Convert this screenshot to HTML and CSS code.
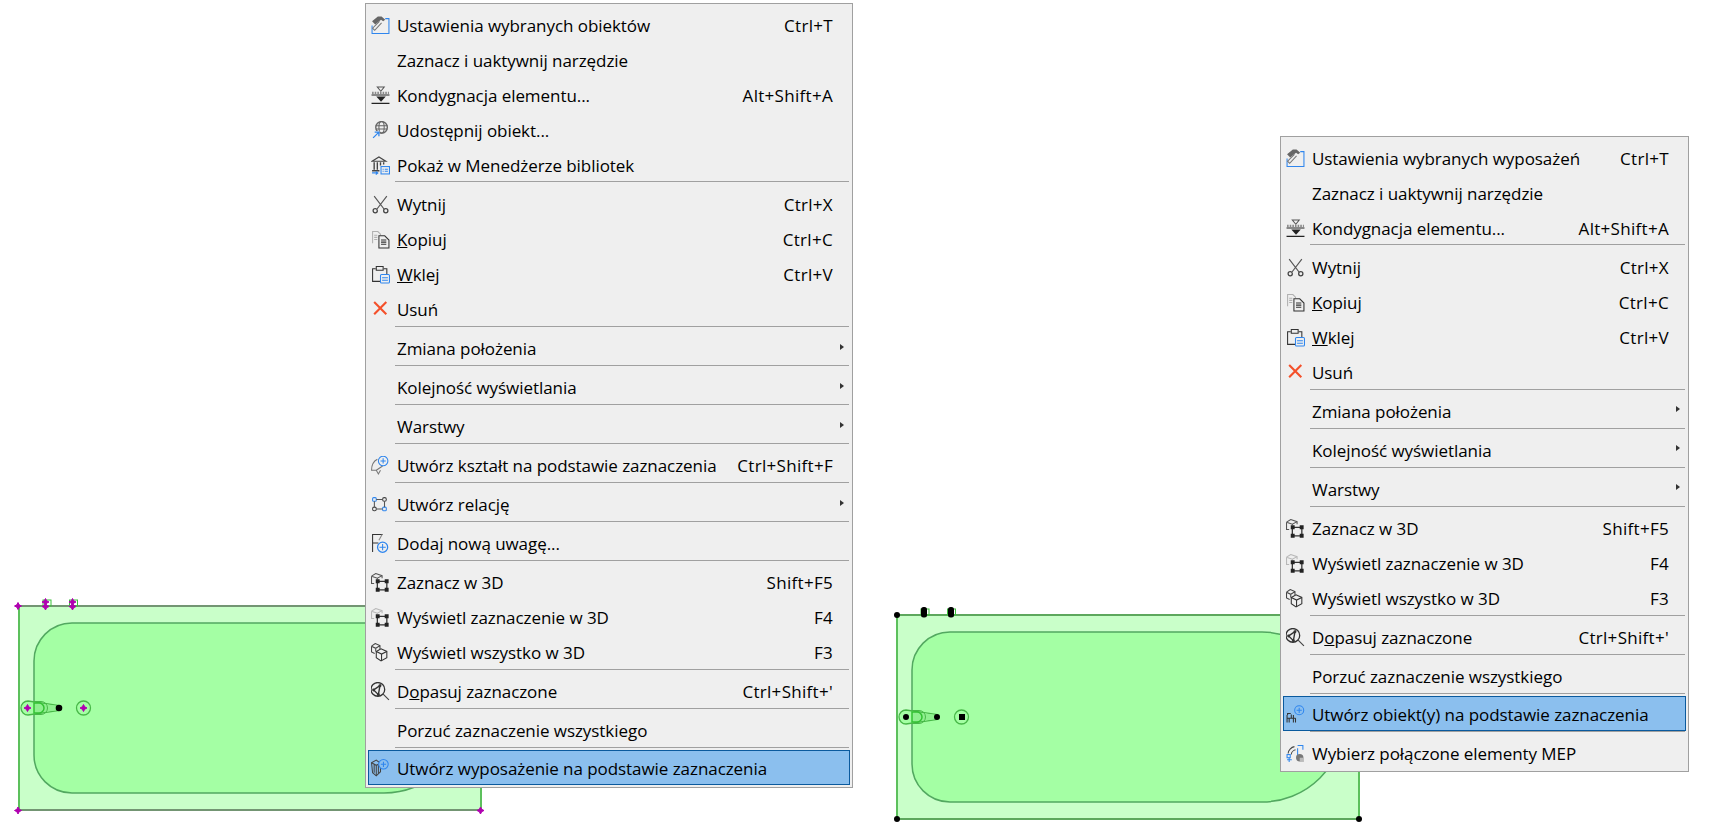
FILE: index.html
```html
<!DOCTYPE html>
<html lang="pl">
<head>
<meta charset="utf-8">
<title>Menu kontekstowe</title>
<link rel="stylesheet" href="styles.css">
</head>
<body>
<svg class="sprite" width="0" height="0" aria-hidden="true">
  <defs>
    <symbol id="i-settings" viewBox="0 0 18 18">
      <path d="M1 9v7.500h16V2.500H13.500" fill="none" stroke="#2f86ee" stroke-width="1"/>
      <path d="M1 5 6.500 0.500h3.500l3.500 3-2 1.500L9.500 3.500 4 8Z" fill="#666"/>
      <path d="M8 5 1.500 11.500 3.500 13.500 10 6.500" fill="none" stroke="#777"/>
    </symbol>
    <symbol id="i-level" viewBox="0 0 18 18">
      <path d="M6 1h6.500l-3.200 4z" fill="none" stroke="#555"/>
      <path d="M1 6.500h16" stroke="#888" stroke-width="2" stroke-dasharray="1.500 1"/>
      <path d="M0.500 8.500h17M0.500 16.500h17" stroke="#222" stroke-width="1.100"/>
      <path d="M5 10h9l-4.500 5z" fill="#222"/>
    </symbol>
    <symbol id="i-share" viewBox="0 0 18 18">
      <circle cx="10" cy="6" r="5.500" fill="none" stroke="#666" stroke-width="1.300"/>
      <ellipse cx="10" cy="6" rx="2.500" ry="5.500" fill="none" stroke="#666"/>
      <path d="M4.500 4.500h11M4.500 7.500h11" stroke="#666"/>
      <path d="M1 9.500h7v7H1z" fill="#efefef"/>
      <path d="M2 16 7 11M3.500 10.500H7.500V14.500" fill="none" stroke="#2f86ee" stroke-width="1.200"/>
    </symbol>
    <symbol id="i-library" viewBox="0 0 18 18">
      <path d="M1 5 7.500 1 14 5Z" fill="none" stroke="#444" stroke-width="1.100"/>
      <path d="M3 6v7M6 6v7M9 6v3M12 6v2M1 14h7" stroke="#444" stroke-width="1.300"/>
      <rect x="9.500" y="10" width="8" height="7" fill="#efefef" stroke="#2f86ee"/>
      <path d="M11 12.500h1M13 12.500h3M11 14.500h1M13 14.500h3" stroke="#2f86ee"/>
      <path d="M1 16h5M4.500 14.500 6.500 16 4.500 17.500" fill="none" stroke="#2f86ee"/>
    </symbol>
    <symbol id="i-cut" viewBox="0 0 18 18">
      <path d="M3 1l9.500 12.500M15 1 5.500 13.500" stroke="#555" stroke-width="1.100"/>
      <circle cx="4" cy="15" r="2" fill="none" stroke="#444" stroke-width="1.200"/>
      <circle cx="14" cy="15" r="2" fill="none" stroke="#444" stroke-width="1.200"/>
    </symbol>
    <symbol id="i-copy" viewBox="0 0 18 18">
      <path d="M1.500 12.500v-11h5l2.500 2.500v1" fill="none" stroke="#b0b0b0"/>
      <path d="M3 5h3M3 7h3M3 9h3" stroke="#b0b0b0"/>
      <path d="M7.500 5.500h5.500l4 4v7.500H7.500Z" fill="#efefef" stroke="#333"/>
      <path d="M9.500 9.500h5M9.500 11.500h5M9.500 13.500h5" stroke="#333"/>
    </symbol>
    <symbol id="i-paste" viewBox="0 0 18 18">
      <path d="M9 15.500H1.500v-12h3M12 3.500h3v5" fill="none" stroke="#333"/>
      <path d="M5 1.500h6.500v3.500H5z" fill="none" stroke="#333"/>
      <rect x="9" y="9" width="8.500" height="8" rx="1" fill="#efefef" stroke="#2f86ee"/>
      <path d="M10.500 12h5.500M10.500 14.500h5.500" stroke="#2f86ee"/>
    </symbol>
    <symbol id="i-delete" viewBox="0 0 18 18">
      <path d="M3 2 14.500 13.500M14.500 2 3 13.500" stroke="#f4502a" stroke-width="2"/>
    </symbol>
    <symbol id="i-shape" viewBox="0 0 18 18">
      <path d="M6 3C2 5 0.500 9 0.500 13.500H5L7 17l2-3.500M5 13.500 11 9.500" fill="none" stroke="#777"/>
      <circle cx="11.500" cy="4.700" r="4.500" fill="#efefef" stroke="#2f86ee"/>
      <path d="M9 4.700h5M11.500 2.200v5" stroke="#2f86ee"/>
    </symbol>
    <symbol id="i-relation" viewBox="0 0 18 18">
      <rect x="1.500" y="2.500" width="3.500" height="3.500" rx="1" fill="none" stroke="#2f86ee"/>
      <rect x="11" y="2.500" width="3.500" height="3.500" rx="1.500" fill="none" stroke="#444"/>
      <rect x="1.500" y="11.500" width="3.500" height="3.500" rx="1.500" fill="none" stroke="#444"/>
      <rect x="11" y="11.500" width="3.500" height="3.500" rx="1" fill="none" stroke="#2f86ee"/>
      <path d="M5 4.200h6M3.200 6v5.500M12.800 6v5.500M5 13.200h6" stroke="#555"/>
    </symbol>
    <symbol id="i-note" viewBox="0 0 18 18">
      <path d="M1.500 17V0.500H11M1.500 8.500H7" fill="none" stroke="#333"/>
      <path d="M7.500 6 10.500 0.500" stroke="#888"/>
      <circle cx="11" cy="12.500" r="4.800" fill="#efefef" stroke="#2f86ee" stroke-width="1.200"/>
      <path d="M8 12.500h6M11 9.500v6" stroke="#2f86ee"/>
    </symbol>
    <symbol id="i-sel3d" viewBox="0 0 18 18">
      <path d="M0.500 3 4.500 0.500 10.500 2.500V5M0.500 3 6 5 10.500 2.500M0.500 3V10H3M6 5V6" fill="none" stroke="#555"/>
      <path d="M6 8H15V16H6Z" fill="none" stroke="#333" stroke-width="1.200"/>
      <path d="M4.500 6h3.700v3.700H4.500zM13 6h3.700v3.700H13zM4.500 14h3.700v3.700H4.500zM13 14h3.700v3.700H13z" fill="#222"/>
    </symbol>
    <symbol id="i-show3d" viewBox="0 0 18 18">
      <path d="M0.500 3 4.500 0.500 10.500 2.500V5M0.500 3 6 5 10.500 2.500M0.500 3V10H3M6 5V6" fill="none" stroke="#b8b8b8"/>
      <path d="M6 8H15V16H6Z" fill="none" stroke="#333" stroke-width="1.200"/>
      <path d="M4.500 6h3.700v3.700H4.500zM13 6h3.700v3.700H13zM4.500 14h3.700v3.700H4.500zM13 14h3.700v3.700H13z" fill="#222"/>
    </symbol>
    <symbol id="i-all3d" viewBox="0 0 18 18">
      <path d="M0.500 3 4 0.500 8.500 2.500V6M0.500 3V8.500L3.500 10M0.500 3 4.500 5 8.500 2.500M4.500 5V8" fill="none" stroke="#444"/>
      <path d="M5 8 9.500 5.500 15 8v6l-5.500 3L5 14Z" fill="#efefef" stroke="#333"/>
      <path d="M5 8l5 2.500 5-2.500M10 10.500V17" fill="none" stroke="#333"/>
    </symbol>
    <symbol id="i-fit" viewBox="0 0 18 18">
      <circle cx="6.500" cy="7" r="6.500" fill="none" stroke="#333" stroke-width="1.200"/>
      <path d="M11.500 11.500 17 17" stroke="#444" stroke-width="1.100"/>
      <path d="M8.500 3.500 2.500 7.500 7 12Z" fill="none" stroke="#333" stroke-width="1.300"/>
      <circle cx="8.500" cy="3.500" r="1.400" fill="#333"/>
      <circle cx="2.500" cy="7.500" r="1.400" fill="#333"/>
      <circle cx="7" cy="12" r="1.400" fill="#333"/>
    </symbol>
    <symbol id="i-furn" viewBox="0 0 18 18">
      <path d="M0.500 3.500 5 1 9 4V12L5 16 1.500 13Z" fill="none" stroke="#444"/>
      <path d="M0.500 3.500 5 6 9 4M3 5v8M5 6V16M7 5.500V14" fill="none" stroke="#444"/>
      <circle cx="11.800" cy="5" r="4.500" fill="#8bbfee" stroke="#2f86ee"/>
      <path d="M9.300 5h5M11.800 2.500v5" stroke="#2f86ee"/>
    </symbol>
    <symbol id="i-chair" viewBox="0 0 18 18">
      <path d="M1 9.500v7M4.500 8h-3v1.500M5 9v3M1 12.500h8M3 12.500v4M7 12.500v4M9 12.500v4M7 9.500v3" fill="none" stroke="#333"/>
      <circle cx="12.500" cy="5" r="4.300" fill="#8bbfee" stroke="#2f86ee"/>
      <path d="M10 5h5M12.500 2.500v5" stroke="#2f86ee"/>
    </symbol>
    <symbol id="i-mep" viewBox="0 0 18 18">
      <path d="M2 9C2 6 5 3 8 2.500M5 10C5 8 7 6 9 5.500" fill="none" stroke="#444"/>
      <path d="M11 1.500h5v4M11 4v8" fill="none" stroke="#2f86ee"/>
      <rect x="1" y="10" width="3" height="3" fill="none" stroke="#2f86ee"/>
      <path d="M5.500 15H1M3 13v4" stroke="#2f86ee"/>
      <circle cx="13" cy="13" r="3.500" fill="#777"/>
      <path d="M13 13h4v4h-4z" fill="#bbb"/>
    </symbol>
    <g id="tub">
      <rect x="0" y="0" width="462" height="204" fill="#c9ffc9" stroke="#5cc05c" stroke-width="2"/>
      <path d="M0 0H462M0 204H462" stroke="var(--edge)" stroke-width="1"/>
      <path d="M15 55A38 38 0 0 1 53 17H365A82 82 0 0 1 447 99V105A82 82 0 0 1 365 187H53A38 38 0 0 1 15 149Z" fill="#a4ffa4" stroke="#52a860" stroke-width="1.500"/>
      <path d="M9 95 40 99.500V104.500L9 109A7 7 0 0 1 9 95Z" fill="#a4ffa4" stroke="#48b848" stroke-width="1.300"/>
      <path d="M15 96.500 40 100V104L15 107.500Z" fill="#8ff08f"/>
      <path d="M15 97H20A5 5 0 0 1 20 107H15Z" fill="#8ff08f" stroke="#33c033" stroke-width="1.500"/>
      <path d="M15 95.500H22A6.500 6.500 0 0 1 22 108.500H15" fill="none" stroke="#48b848"/>
      <circle cx="64.500" cy="102" r="7" fill="none" stroke="#48b848" stroke-width="1.300"/>
      <rect x="24" y="-6" width="8" height="6" fill="none" stroke="#3cc03c"/>
      <rect x="50.500" y="-6" width="8" height="6" fill="none" stroke="#3cc03c"/>
    </g>
    <path id="dia" d="M0-3.500 1.200-1.200 3.500 0 1.200 1.200 0 3.500-1.200 1.200-3.500 0-1.200-1.200Z" fill="#b000b0" stroke="#b000b0"/>
  </defs>
</svg>

<svg class="canvas" width="1722" height="828" aria-hidden="true">
  <use href="#tub" x="19" y="606" class="edge-purple"/>
  <use href="#dia" x="18" y="606"/>
  <use href="#dia" x="45.500" y="602"/>
  <use href="#dia" x="45.500" y="606.500"/>
  <use href="#dia" x="72.500" y="602"/>
  <use href="#dia" x="72.500" y="606.500"/>
  <use href="#dia" x="27.500" y="708"/>
  <use href="#dia" x="83.500" y="708"/>
  <use href="#dia" x="18" y="810.500"/>
  <use href="#dia" x="480.500" y="810.500"/>
  <circle cx="59" cy="708" r="3.300" fill="#000"/>

  <use href="#tub" x="897" y="615" class="edge-grey"/>
  <circle cx="897" cy="615" r="3" fill="#000"/>
  <circle cx="897" cy="819" r="3" fill="#000"/>
  <circle cx="1359" cy="819" r="3" fill="#000"/>
  <rect x="921" y="607" width="6" height="10.500" rx="2.500" fill="#000"/>
  <rect x="948" y="607" width="6" height="10.500" rx="2.500" fill="#000"/>
  <circle cx="906" cy="717" r="3" fill="#000"/>
  <circle cx="937" cy="717" r="3" fill="#000"/>
  <rect x="959" y="714" width="6" height="6" fill="#000"/>
</svg>

<nav class="menu menu-a">
  <div class="item"><svg class="ic"><use href="#i-settings"/></svg><span class="label">Ustawienia wybranych obiektów</span><span class="key">Ctrl+T</span></div>
  <div class="item"><span class="ic"></span><span class="label">Zaznacz i uaktywnij narzędzie</span></div>
  <div class="item"><svg class="ic"><use href="#i-level"/></svg><span class="label">Kondygnacja elementu...</span><span class="key">Alt+Shift+A</span></div>
  <div class="item"><svg class="ic"><use href="#i-share"/></svg><span class="label">Udostępnij obiekt...</span></div>
  <div class="item"><svg class="ic"><use href="#i-library"/></svg><span class="label">Pokaż w Menedżerze bibliotek</span></div>
  <div class="sep"></div>
  <div class="item"><svg class="ic"><use href="#i-cut"/></svg><span class="label">Wytni<u>j</u></span><span class="key">Ctrl+X</span></div>
  <div class="item"><svg class="ic"><use href="#i-copy"/></svg><span class="label"><u>K</u>opiuj</span><span class="key">Ctrl+C</span></div>
  <div class="item"><svg class="ic"><use href="#i-paste"/></svg><span class="label"><u>W</u>klej</span><span class="key">Ctrl+V</span></div>
  <div class="item"><svg class="ic"><use href="#i-delete"/></svg><span class="label">Usuń</span></div>
  <div class="sep"></div>
  <div class="item sub"><span class="ic"></span><span class="label">Zmiana położenia</span></div>
  <div class="sep"></div>
  <div class="item sub"><span class="ic"></span><span class="label">Kolejność wyświetlania</span></div>
  <div class="sep"></div>
  <div class="item sub"><span class="ic"></span><span class="label">Warstwy</span></div>
  <div class="sep"></div>
  <div class="item"><svg class="ic"><use href="#i-shape"/></svg><span class="label">Utwórz kształt na podstawie zaznaczenia</span><span class="key">Ctrl+Shift+F</span></div>
  <div class="sep"></div>
  <div class="item sub"><svg class="ic"><use href="#i-relation"/></svg><span class="label">Utwórz relację</span></div>
  <div class="sep"></div>
  <div class="item"><svg class="ic"><use href="#i-note"/></svg><span class="label">Dodaj nową uwagę...</span></div>
  <div class="sep"></div>
  <div class="item"><svg class="ic"><use href="#i-sel3d"/></svg><span class="label">Zaznacz w 3D</span><span class="key">Shift+F5</span></div>
  <div class="item"><svg class="ic"><use href="#i-show3d"/></svg><span class="label">Wyświetl zaznaczenie w 3D</span><span class="key">F4</span></div>
  <div class="item"><svg class="ic"><use href="#i-all3d"/></svg><span class="label">Wyświetl wszystko w 3D</span><span class="key">F3</span></div>
  <div class="sep"></div>
  <div class="item"><svg class="ic"><use href="#i-fit"/></svg><span class="label">D<u>o</u>pasuj zaznaczone</span><span class="key">Ctrl+Shift+'</span></div>
  <div class="sep"></div>
  <div class="item"><span class="ic"></span><span class="label">Porzuć zaznaczenie wszystkiego</span></div>
  <div class="sep"></div>
  <div class="item active"><svg class="ic"><use href="#i-furn"/></svg><span class="label">Utwórz wyposażenie na podstawie zaznaczenia</span></div>
</nav>

<nav class="menu menu-b">
  <div class="item"><svg class="ic"><use href="#i-settings"/></svg><span class="label">Ustawienia wybranych wyposażeń</span><span class="key">Ctrl+T</span></div>
  <div class="item"><span class="ic"></span><span class="label">Zaznacz i uaktywnij narzędzie</span></div>
  <div class="item"><svg class="ic"><use href="#i-level"/></svg><span class="label">Kondygnacja elementu...</span><span class="key">Alt+Shift+A</span></div>
  <div class="sep"></div>
  <div class="item"><svg class="ic"><use href="#i-cut"/></svg><span class="label">Wytni<u>j</u></span><span class="key">Ctrl+X</span></div>
  <div class="item"><svg class="ic"><use href="#i-copy"/></svg><span class="label"><u>K</u>opiuj</span><span class="key">Ctrl+C</span></div>
  <div class="item"><svg class="ic"><use href="#i-paste"/></svg><span class="label"><u>W</u>klej</span><span class="key">Ctrl+V</span></div>
  <div class="item"><svg class="ic"><use href="#i-delete"/></svg><span class="label">Usuń</span></div>
  <div class="sep"></div>
  <div class="item sub"><span class="ic"></span><span class="label">Zmiana położenia</span></div>
  <div class="sep"></div>
  <div class="item sub"><span class="ic"></span><span class="label">Kolejność wyświetlania</span></div>
  <div class="sep"></div>
  <div class="item sub"><span class="ic"></span><span class="label">Warstwy</span></div>
  <div class="sep"></div>
  <div class="item"><svg class="ic"><use href="#i-sel3d"/></svg><span class="label">Zaznacz w 3D</span><span class="key">Shift+F5</span></div>
  <div class="item"><svg class="ic"><use href="#i-show3d"/></svg><span class="label">Wyświetl zaznaczenie w 3D</span><span class="key">F4</span></div>
  <div class="item"><svg class="ic"><use href="#i-all3d"/></svg><span class="label">Wyświetl wszystko w 3D</span><span class="key">F3</span></div>
  <div class="sep"></div>
  <div class="item"><svg class="ic"><use href="#i-fit"/></svg><span class="label">D<u>o</u>pasuj zaznaczone</span><span class="key">Ctrl+Shift+'</span></div>
  <div class="sep"></div>
  <div class="item"><span class="ic"></span><span class="label">Porzuć zaznaczenie wszystkiego</span></div>
  <div class="sep"></div>
  <div class="item active"><svg class="ic"><use href="#i-chair"/></svg><span class="label">Utwórz obiekt(y) na podstawie zaznaczenia</span></div>
  <div class="sep"></div>
  <div class="item"><svg class="ic"><use href="#i-mep"/></svg><span class="label">Wybierz połączone elementy MEP</span></div>
</nav>
</body>
</html>
```
FILE: styles.css
```css
html, body {
  margin: 0;
  padding: 0;
  background: #fff;
}
body {
  width: 1722px;
  height: 828px;
  overflow: hidden;
  font-family: "Open Sans", "Noto Sans", "Liberation Sans", sans-serif;
  font-size: 17px;
  color: #000;
}
.sprite {
  position: absolute;
}
.canvas {
  position: absolute;
  left: 0;
  top: 0;
}
.edge-purple {
  --edge: #8a6a8a;
}
.edge-grey {
  --edge: #5f8f5f;
}
.menu {
  position: absolute;
  box-sizing: border-box;
  background: #efefef;
  border: 1px solid #a0a0a0;
  padding: 2px 2px 1px 2px;
  display: flex;
  flex-direction: column;
}
.menu-a {
  left: 365px;
  top: 3px;
  width: 488px;
  height: 785px;
}
.menu-b {
  left: 1280px;
  top: 136px;
  width: 409px;
  height: 636px;
}
.item {
  position: relative;
  box-sizing: border-box;
  height: 35.100px;
  flex: none;
  display: flex;
  align-items: center;
  padding: 3px 16px 0 2px;
  border: 1px solid transparent;
  border-width: 0 1px;
}
.ic {
  width: 19px;
  height: 19px;
  flex: none;
  margin-right: 7px;
}
.label {
  flex: 1;
  white-space: nowrap;
  letter-spacing: -0.060px;
}
.key {
  white-space: nowrap;
  letter-spacing: 0.300px;
}
.sub::after {
  content: "";
  position: absolute;
  right: 5px;
  top: 14px;
  border-left: 4px solid #333;
  border-top: 3.500px solid transparent;
  border-bottom: 3.500px solid transparent;
}
.sep {
  box-sizing: border-box;
  height: 3.900px;
  flex: none;
  margin: 0 1px 0 27px;
  border-top: 1px solid #a0a0a0;
}
.active {
  background: #8bbfee;
  border: 1px solid #0a5a9e;
  margin-top: -0.500px;
  height: 35px;
  padding-top: 2px;
}
```
